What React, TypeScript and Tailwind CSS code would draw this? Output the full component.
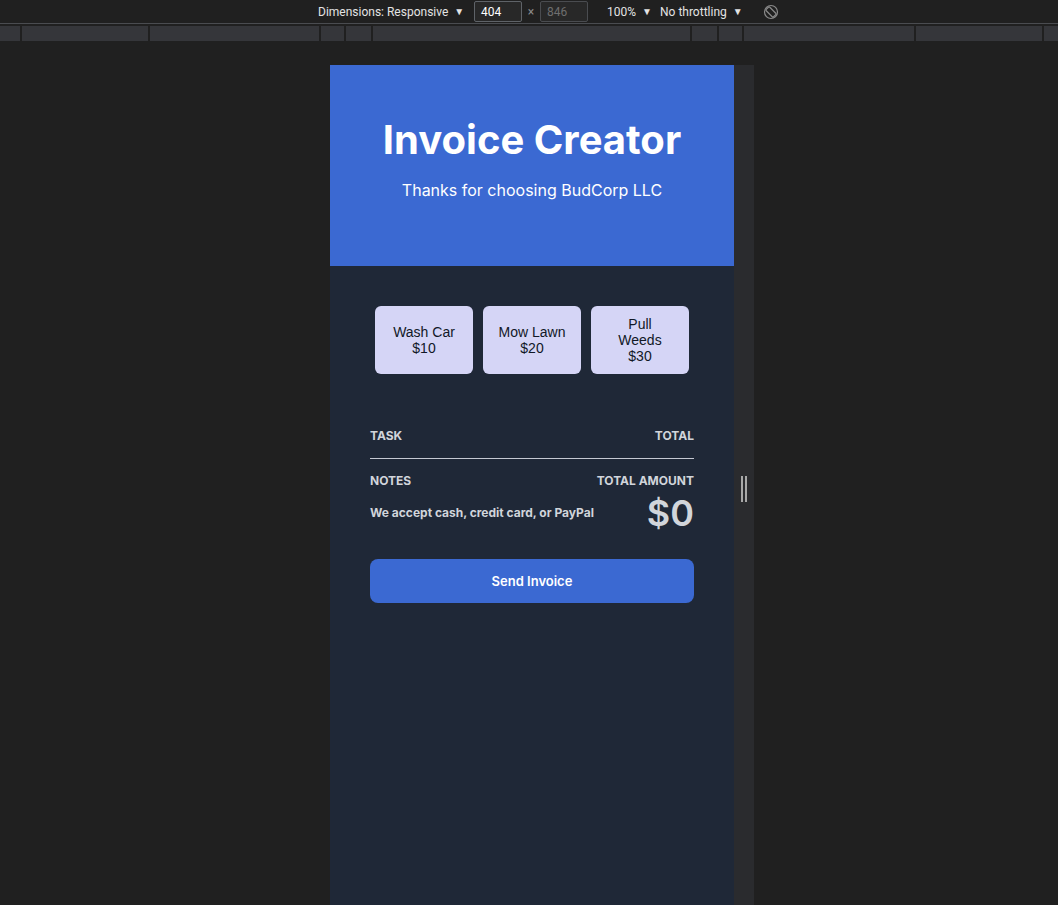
import React from 'react';

const rulerSegments = [20, 126, 169, 23, 25, 317, 25, 23, 170, 126, 14];

const tasks = [
    { name: 'Wash Car', price: 10 },
    { name: 'Mow Lawn', price: 20 },
    { name: 'Pull Weeds', price: 30 },
];

const Caret: React.FC = () => <span className="ml-[6px] text-[10px] leading-none">▼</span>;

const DevToolbar: React.FC = () => (
    <div className="h-6 flex items-center border-b border-[#4a4c50] text-[12px] text-[#e3e3e3] font-['Roboto',sans-serif]">
        <div className="ml-[318px] flex items-center w-[156px]">
            Dimensions: Responsive<Caret />
        </div>
        <div className="w-[48px] h-[21px] border border-[#5f6368] rounded-[2px] bg-[#282828] flex items-center pl-[6px] text-white">404</div>
        <span className="w-[18px] text-center text-[#8a8a8a]">×</span>
        <div className="w-[48px] h-[21px] border border-[#4a4c50] rounded-[2px] bg-[#282828] flex items-center pl-[6px] text-[#6e6e6e]">846</div>
        <div className="ml-[19px] flex items-center w-[53px]">
            100%<Caret />
        </div>
        <div className="flex items-center w-[95px]">
            No throttling<Caret />
        </div>
        <svg width="16" height="16" viewBox="0 0 16 16" className="ml-[8px] text-[#8a8a8a]" fill="none" stroke="currentColor" strokeWidth="1.2">
            <circle cx="8" cy="8" r="6.5" />
            <rect x="5.5" y="2.8" width="5" height="10.4" rx="1" transform="rotate(-45 8 8)" />
        </svg>
    </div>
);

const Ruler: React.FC = () => (
    <div className="mt-[2px] h-[15px] flex gap-[2px]">
        {rulerSegments.map((w, i) => (
            <div key={i} className="h-full bg-[#35363a] shrink-0" style={{ width: w }} />
        ))}
    </div>
);

const InvoiceApp: React.FC = () => (
    <div className="w-[404px] h-[840px] bg-[#1f2837] font-['Inter',sans-serif]">
        <header className="h-[201px] bg-[#3b69d2] text-white text-center pt-[51px]">
            <h1 className="text-[40px] leading-[48px] font-bold">Invoice Creator</h1>
            <p className="mt-[14px] text-base leading-6">Thanks for choosing BudCorp LLC</p>
        </header>
        <main className="px-10 pt-10">
            <div className="flex justify-center gap-[10px]">
                {tasks.map(t => (
                    <button
                        key={t.name}
                        className="w-[98px] h-[68px] rounded-[6px] bg-[#d5d5f6] text-[#111827] text-[14px] leading-4 px-[14px] font-['Liberation_Sans',Arial,sans-serif] flex flex-col items-center justify-center"
                    >
                        <span>{t.name}</span>
                        <span>${t.price}</span>
                    </button>
                ))}
            </div>
            <div className="mt-[54px] flex justify-between text-[12px] leading-4 font-bold text-[#d1d5db]">
                <span>TASK</span>
                <span>TOTAL</span>
            </div>
            <div className="mt-[14px] h-px bg-[#c5c9d2]" />
            <div className="mt-[14px] flex justify-between text-[#d1d5db]">
                <div>
                    <div className="text-[12px] leading-4 font-bold">NOTES</div>
                    <div className="mt-4 text-[12px] leading-4 font-bold">We accept cash, credit card, or PayPal</div>
                </div>
                <div className="text-right">
                    <div className="text-[12px] leading-4 font-bold">TOTAL AMOUNT</div>
                    <div className="mt-1 text-4xl leading-10 font-semibold">$0</div>
                </div>
            </div>
            <button className="mt-[26px] w-full h-11 rounded-lg bg-[#3b69d2] text-white text-[13px] leading-none font-semibold">
                Send Invoice
            </button>
        </main>
    </div>
);

export default function App() {
    return (
        <div className="h-[905px] overflow-hidden bg-[#202020]">
            <DevToolbar />
            <Ruler />
            <div className="mt-[24px] pl-[330px] flex">
                <InvoiceApp />
                <div className="w-5 h-[840px] bg-[#2a2b2e] flex items-start justify-center gap-[2px] pt-[411px]">
                    <div className="w-[2px] h-[26px] bg-[#a8a8a8]" />
                    <div className="w-[2px] h-[26px] bg-[#a8a8a8]" />
                </div>
            </div>
        </div>
    );
}
